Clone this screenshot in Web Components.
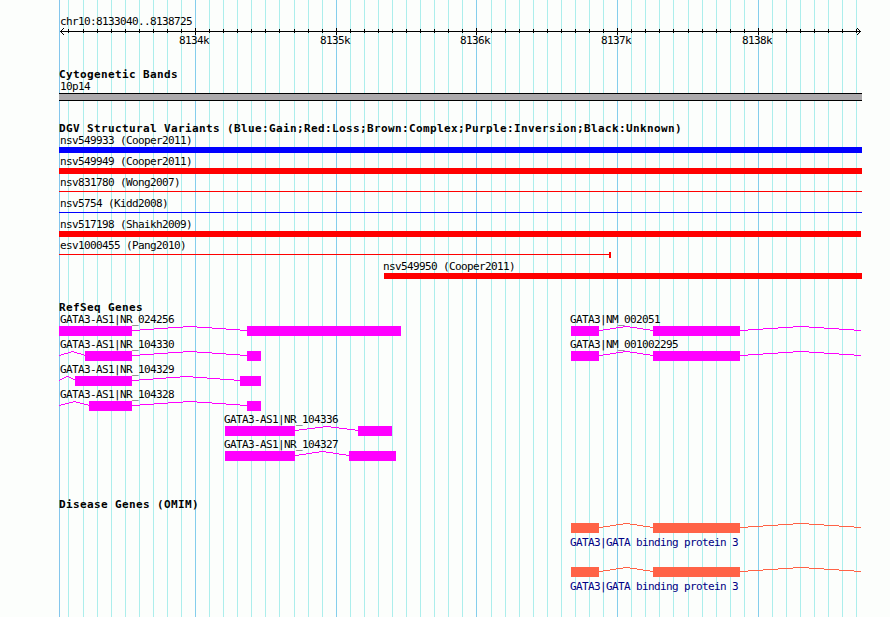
<!DOCTYPE html>
<html lang="en">
<head>
<meta charset="utf-8">
<title>chr10:8133040..8138725</title>
<style>
  body {
    margin: 0;
    background: #fcfefc;
    overflow: hidden;
  }
</style>
</head>
<body>
<genome-view>
  <scale-ruler region="chr10:8133040..8138725"></scale-ruler>

  <genome-track name="Cytogenetic Bands" style="margin-top: 21px">
    <track-row>
      <cyto-band label="10p14"></cyto-band>
    </track-row>
  </genome-track>

  <genome-track name="DGV Structural Variants (Blue:Gain;Red:Loss;Brown:Complex;Purple:Inversion;Black:Unknown)" style="margin-top: 20px">
    <track-row><variant-bar label="nsv549933 (Cooper2011)" color="#0000ff"></variant-bar></track-row>
    <track-row><variant-bar label="nsv549949 (Cooper2011)" color="#ff0000"></variant-bar></track-row>
    <track-row><variant-bar label="nsv831780 (Wong2007)" color="#ff0000" thin></variant-bar></track-row>
    <track-row><variant-bar label="nsv5754 (Kidd2008)" color="#0000ff" thin></variant-bar></track-row>
    <track-row><variant-bar label="nsv517198 (Shaikh2009)" color="#ff0000" end="802"></variant-bar></track-row>
    <track-row><variant-bar label="esv1000455 (Pang2010)" color="#ff0000" end="552" thin cap></variant-bar></track-row>
    <track-row><variant-bar label="nsv549950 (Cooper2011)" color="#ff0000" start="325"></variant-bar></track-row>
  </genome-track>

  <genome-track name="RefSeq Genes" style="margin-top: 20px">
    <track-row>
      <gene-model label="GATA3-AS1|NR_024256" exons="0-73 188-342"></gene-model>
      <gene-model label="GATA3|NM_002051" exons="512-540 594-681" tail="802"></gene-model>
    </track-row>
    <track-row>
      <gene-model label="GATA3-AS1|NR_104330" exons="26-73 188-202" head="0"></gene-model>
      <gene-model label="GATA3|NM_001002295" exons="512-540 594-681" tail="802"></gene-model>
    </track-row>
    <track-row><gene-model label="GATA3-AS1|NR_104329" exons="16-73 181-202" head="0"></gene-model></track-row>
    <track-row><gene-model label="GATA3-AS1|NR_104328" exons="30-73 188-202" head="0"></gene-model></track-row>
    <track-row><gene-model label="GATA3-AS1|NR_104336" exons="166-236 299-333"></gene-model></track-row>
    <track-row><gene-model label="GATA3-AS1|NR_104327" exons="166-236 290-337"></gene-model></track-row>
  </genome-track>

  <genome-track name="Disease Genes (OMIM)" style="margin-top: 35px">
    <track-row style="margin: 13px 0 18px">
      <gene-model label="GATA3|GATA binding protein 3" exons="512-540 594-681" tail="802" color="#ff6347" below></gene-model>
    </track-row>
    <track-row>
      <gene-model label="GATA3|GATA binding protein 3" exons="512-540 594-681" tail="802" color="#ff6347" below></gene-model>
    </track-row>
  </genome-track>
</genome-view>

<script>
const WIDTH = 803;

// tick positions, relative to the left edge of the panel
const ticks = [];
for (let i = 0; i < 57; i++) {
  ticks.push({ x: Math.floor(9.95 + 14.0697 * i), major: i % 10 === 9, n: 8134 + (i - 9) / 10 });
}

const rect = (x, y, w, h, fill) =>
  `<rect x="${x}" y="${y}" width="${w}" height="${h}" fill="${fill}"/>`;

class GenomeView extends HTMLElement {
  constructor() {
    super();
    this.attachShadow({mode:'open'});
  }
  connectedCallback() {
    const lines = ticks.map(t => rect(t.x, 0, 1, 617, t.major ? '#84ceec' : '#aceeec')).join('');
    this.shadowRoot.innerHTML = `
      <style>
        :host {
          display: block;
          position: relative;
          box-sizing: border-box;
          width: 890px;
          height: 617px;
          padding: 15px 28px 0 59px;
          font: 11px/13px "DejaVu Sans Mono", monospace;
          letter-spacing: -0.622px;
          color: #000;
        }
        .grid {
          position: absolute;
          left: 59px;
          top: 0;
        }
        .tracks {
          position: relative;
          display: flex;
          flex-direction: column;
        }
      </style>
      <svg class="grid" width="${WIDTH}" height="617">${rect(0, 0, 1, 617, '#84c6ec')}${lines}</svg>
      <div class="tracks"><slot></slot></div>
    `;
  }
}

class ScaleRuler extends HTMLElement {
  constructor() {
    super();
    this.attachShadow({mode:'open'});
  }
  connectedCallback() {
    const marks = ticks.map(t => t.major ? rect(t.x, 0, 1, 7, '#000') : rect(t.x, 1, 1, 4, '#000')).join('');
    const labels = ticks.filter(t => t.major)
      .map(t => `<text x="${t.x - 16}" y="16">${t.n}k</text>`).join('');
    let heads = '';
    for (let i = 1; i < 4; i++) {
      heads += rect(1 + i, 3 - i, 1, 1, '#000') + rect(1 + i, 3 + i, 1, 1, '#000');
      heads += rect(801 - i, 3 - i, 1, 1, '#000') + rect(801 - i, 3 + i, 1, 1, '#000');
    }
    this.shadowRoot.innerHTML = `
      <style>
        :host { display: block; height: 32px; }
        .region { padding-left: 1px; }
        svg { display: block; }
      </style>
      <div class="region">${this.getAttribute('region')}</div>
      <svg width="${WIDTH}" height="19">${rect(1, 3, 801, 1, '#000')}${heads}${marks}${labels}</svg>
    `;
  }
}

class GenomeTrack extends HTMLElement {
  constructor() {
    super();
    this.attachShadow({mode:'open'});
  }
  connectedCallback() {
    this.shadowRoot.innerHTML = `
      <style>
        :host { display: block; }
        .name {
          height: 12px;
          font-weight: bold;
          letter-spacing: 0.378px;
          white-space: nowrap;
        }
      </style>
      <div class="name">${this.getAttribute('name')}</div>
      <slot></slot>
    `;
  }
}

// features of one row share a single grid cell
class TrackRow extends HTMLElement {
  constructor() {
    super();
    this.attachShadow({mode:'open'}).innerHTML = `
      <style>
        :host { display: grid; margin-bottom: 2px; }
        ::slotted(*) { grid-area: 1 / 1; }
      </style>
      <slot></slot>
    `;
  }
}

class CytoBand extends HTMLElement {
  constructor() {
    super();
    this.attachShadow({mode:'open'});
  }
  connectedCallback() {
    this.shadowRoot.innerHTML = `
      <style>
        :host { display: block; }
        .label { padding-left: 1px; }
        .band {
          height: 6px;
          background: #acaaac;
          border: solid #000;
          border-width: 1px 0;
          margin-bottom: -2px;
          width: ${WIDTH}px;
        }
      </style>
      <div class="label">${this.getAttribute('label')}</div>
      <div class="band"></div>
    `;
    this.style.marginBottom = '1px';
  }
}

class VariantBar extends HTMLElement {
  constructor() {
    super();
    this.attachShadow({mode:'open'});
  }
  connectedCallback() {
    const start = Number(this.getAttribute('start') || 0);
    const end = Number(this.getAttribute('end') || WIDTH);
    const color = this.getAttribute('color');
    const w = end - start;
    let shape = this.hasAttribute('thin') ? rect(0, 2, w, 1, color) : rect(0, 0, w, 6, color);
    if (this.hasAttribute('cap')) shape += rect(w - 2, 0, 2, 6, color);
    this.shadowRoot.innerHTML = `
      <style>
        :host { display: block; margin-left: ${start}px; }
        .label { padding-left: 1px; margin-left: ${start ? -2 : 0}px; }
        svg { display: block; }
      </style>
      <div class="label">${this.getAttribute('label')}</div>
      <svg width="${w}" height="6">${shape}</svg>
    `;
  }
}

class GeneModel extends HTMLElement {
  constructor() {
    super();
    this.attachShadow({mode:'open'});
  }
  // intron drawn as a shallow hat, one pixel column at a time
  intron(from, to, color) {
    const half = (to - from) / 2;
    let out = '';
    let runStart = from;
    let runY = 4;
    for (let x = from; x <= to; x++) {
      const d = Math.min(x - from, to - x);
      const y = x === to ? -1 : 4 - Math.min(4, Math.round(4 * d / half));
      if (y !== runY) {
        out += rect(runStart, runY, x - runStart, 1, color);
        runStart = x;
        runY = y;
      }
    }
    return out;
  }
  connectedCallback() {
    const color = this.getAttribute('color') || '#ff00ff';
    const exons = this.getAttribute('exons').split(' ').map(e => e.split('-').map(Number));
    const head = this.getAttribute('head');
    const tail = this.getAttribute('tail');
    const below = this.hasAttribute('below');
    let shape = '';
    if (head !== null) shape += this.intron(Number(head), exons[0][0], color);
    exons.forEach(([a, b], i) => {
      shape += rect(a, 0, b - a, 10, color);
      if (exons[i + 1]) shape += this.intron(b, exons[i + 1][0], color);
    });
    if (tail !== null) shape += this.intron(exons[exons.length - 1][1], Number(tail), color);
    const left = head !== null || exons[0][0] === 0 ? 1 : exons[0][0] - 1;
    this.shadowRoot.innerHTML = `
      <style>
        :host {
          display: flex;
          flex-direction: ${below ? 'column-reverse' : 'column'};
          gap: ${below ? 3 : 0}px;
        }
        .label {
          padding-left: ${left}px;
          color: ${below ? '#000084' : 'inherit'};
        }
        svg { display: block; }
      </style>
      <div class="label">${this.getAttribute('label')}</div>
      <svg width="${WIDTH}" height="10">${shape}</svg>
    `;
  }
}

customElements.define('genome-view', GenomeView);
customElements.define('scale-ruler', ScaleRuler);
customElements.define('genome-track', GenomeTrack);
customElements.define('track-row', TrackRow);
customElements.define('cyto-band', CytoBand);
customElements.define('variant-bar', VariantBar);
customElements.define('gene-model', GeneModel);
</script>
</body>
</html>
